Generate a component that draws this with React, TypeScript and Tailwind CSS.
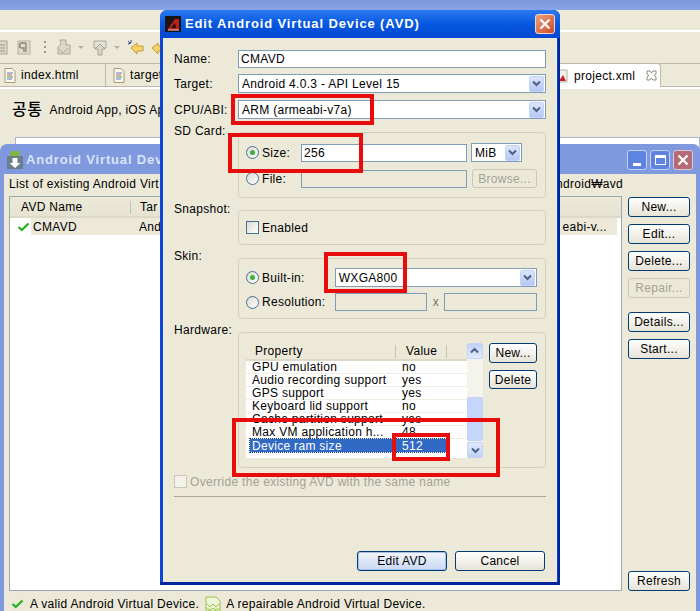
import React from "react";

const FONT = "font-['Liberation_Sans','Noto_Sans_CJK_KR',sans-serif] text-[12px] leading-[14px] tracking-[0.3px]";

function Chevron() {
  return (
    <svg width="9" height="7" viewBox="0 0 9 7" className="block">
      <path d="M1 1.5 L4.5 5 L8 1.5" fill="none" stroke="#4d6185" strokeWidth="2" />
    </svg>
  );
}

function ArrowBtn({ size = "w-[15px] h-[16px]" }: { size?: string }) {
  return (
    <span className={`${size} flex items-center justify-center rounded-[2px] border border-[#c3d3f7] bg-linear-to-b from-[#dbe5fb] to-[#b4c8f5]`}>
      <Chevron />
    </span>
  );
}

function TextBox({ children, className = "", disabled = false }: { children?: React.ReactNode; className?: string; disabled?: boolean }) {
  return (
    <div className={`border border-[#7f9db9] flex items-center pl-[2px] ${disabled ? "bg-[#ece9d8]" : "bg-white text-black"} ${className}`}>
      {children}
    </div>
  );
}

function Combo({ children, className = "" }: { children?: React.ReactNode; className?: string }) {
  return (
    <div className={`border border-[#7f9db9] bg-white flex items-center justify-between pl-[3px] pr-[1px] ${className}`}>
      <span>{children}</span>
      <ArrowBtn />
    </div>
  );
}

function Radio({ on = false }: { on?: boolean }) {
  return (
    <span className="w-[13px] h-[13px] rounded-full border border-[#4a6f94] bg-linear-to-br from-[#dcdcd4] to-white flex items-center justify-center shrink-0">
      {on && <span className="w-[5px] h-[5px] rounded-full bg-[#3fae3a]" />}
    </span>
  );
}

function Btn({ children, className = "", disabled = false, focus = false }: { children: React.ReactNode; className?: string; disabled?: boolean; focus?: boolean }) {
  return (
    <div
      className={`flex items-center justify-center rounded-[3px] border ${
        disabled
          ? "border-[#c9c7ba] bg-[#ece9d8] text-[#a5a294]"
          : focus
          ? "border-[#003c74] bg-linear-to-b from-[#f3f6fc] to-[#c9d8f3] text-black shadow-[inset_0_0_0_1px_#a9c0ea]"
          : "border-[#003c74] bg-linear-to-b from-white to-[#e6e3d6] text-black"
      } ${className}`}
    >
      {children}
    </div>
  );
}

function Group({ className = "", children }: { className?: string; children: React.ReactNode }) {
  return <div className={`min-w-0 rounded-[4px] border border-[#d4d0c0] ${className}`}>{children}</div>;
}

function RedBox({ className }: { className: string }) {
  return <div className={`absolute border-[4px] border-[#e80c0c] pointer-events-none ${className}`} />;
}

function DocIcon() {
  return (
    <svg width="12" height="15" viewBox="0 0 12 15" className="shrink-0">
      <path d="M1 .5H8L11 3.5V14.5H1Z" fill="#fbf8ec" stroke="#a59a78" />
      <path d="M3 5H9" stroke="#5a7fc0" />
      <path d="M3 7H8" stroke="#d05050" />
      <path d="M3 9H9" stroke="#50a060" />
      <path d="M3 11H8" stroke="#5a7fc0" />
    </svg>
  );
}

function Check() {
  return (
    <svg width="13" height="10" viewBox="0 0 13 10" className="shrink-0">
      <path d="M1.5 5 L4.8 8 L11.5 1.5" fill="none" stroke="#1cb51c" strokeWidth="2.2" />
    </svg>
  );
}

function Toolbar() {
  return (
    <div className="h-[31px] flex items-center">
      <svg width="180" height="20" viewBox="0 0 180 20" className="block">
        <rect x="-4" y="3" width="11" height="13" fill="#dbd8c8" stroke="#a9a695" />
        <path d="M0 7H5M0 10H5M0 13H5" stroke="#99968a" />
        <rect x="18" y="3" width="12" height="13" fill="#dfdccd" stroke="#b5b2a2" />
        <path d="M26 5H22a2.5 2.5 0 0 0 0 5h2V14M26 5V14" fill="none" stroke="#8a8778" strokeWidth="1.4" />
        <path d="M45 3v2M45 8v2M45 13v2" stroke="#9a9788" strokeWidth="2" />
        <path d="M60 2h6v5h4v9H58V9l3-3Z" fill="#dbd8c8" stroke="#aaa796" />
        <path d="M59 11 L63 15 L68 10" fill="none" stroke="#aaa796" />
        <path d="M78 8h6l-3 3Z" fill="#b3b0a0" />
        <path d="M94 3h12v7H94Z" fill="#e4e2d4" stroke="#aaa796" />
        <path d="M100 6l5 5h-3v6h-4v-6h-3Z" fill="#dbd8c8" stroke="#a5a291" />
        <path d="M114 8h6l-3 3Z" fill="#b3b0a0" />
        <path d="M128 3l2 2M131 2v3M128 6l3-1" stroke="#2a4a8a" />
        <path d="M131 10l6-5v3h6v5h-6v3Z" fill="#f6d36a" stroke="#c89a2a" />
        <path d="M152 10l6-5v3h6v5h-6v3Z" fill="#f6d36a" stroke="#c89a2a" />
      </svg>
    </div>
  );
}

function Eclipse() {
  return (
    <div className="absolute inset-0 bg-[#ece9d8]">
      <div className="h-[10px] bg-linear-to-b from-[#7d97dc] to-[#8aa5e6]" />
      <div className="h-[20px]" />
      <div className="h-[2px] bg-white" />
      <Toolbar />
      <div className="h-[24px] flex items-stretch border-t border-b border-[#bdbaa9]">
        <div className="w-[106px] border-r border-[#bdbaa9] flex items-center gap-[5px] pl-[4px]">
          <DocIcon />
          <span>index.html</span>
        </div>
        <div className="w-[54px] flex items-center gap-[5px] pl-[7px]">
          <DocIcon />
          <span>target</span>
        </div>
        <div className="flex-1" />
        <div className="w-[103px] h-[24px] -mt-[1px] bg-white border-t border-r border-[#bdbaa9] rounded-tr-[4px] flex items-center gap-[5px]">
          <svg width="10" height="14" viewBox="0 0 10 14" className="shrink-0">
            <path d="M0 1H9V13H0Z" fill="#f4f2ea" stroke="#b5b2a2" />
            <path d="M1 12 L5 6 L8 12Z" fill="#c8202a" />
          </svg>
          <span className="ml-[1px]">project.xml</span>
          <svg width="11" height="11" viewBox="0 0 11 11" className="ml-[6px] shrink-0">
            <path d="M1 1h3l1.5 2L7 1h3v3L8 5.5 10 7v3H7L5.5 8 4 10H1V7l2-1.500L1 4Z" fill="none" stroke="#8c8a7c" />
          </svg>
        </div>
        <div className="w-[39px]" />
      </div>
      <div className="h-[2px] bg-white" />
      <div className="pl-[12px] pt-[14px] flex items-center gap-[7px]">
        <span className="text-[16px] font-medium tracking-[0.5px]">공통</span>
        <span>Android App, iOS Ap</span>
      </div>
      <div className="ml-[15px] mt-[20px] h-[30px] border border-[#a9b8c8] bg-white" />
    </div>
  );
}

function ManagerWindow() {
  return (
    <div className="absolute left-0 top-[144px] w-[700px] h-[467px] flex flex-col rounded-t-[7px] bg-[#7f98de] px-[4px]">
      <div className="h-[30px] -mx-[4px] pl-[5px] pr-[7px] pt-[1px] flex items-center justify-between">
        <div className="flex items-center gap-[3px] pl-[2px]">
          <svg width="16" height="18" viewBox="0 0 16 18">
            <rect x="3" y="0" width="10" height="5" rx="2" fill="#7fb640" />
            <rect x="0" y="5" width="16" height="13" fill="#6b7f88" />
            <path d="M5.5 7h5v5h3l-5.5 5-5.5-5h3Z" fill="#fff" />
          </svg>
          <span className="text-[#d9e4fa] font-bold text-[13px] tracking-[0.85px]">Android Virtual Dev</span>
        </div>
        <div className="flex gap-[3px]">
          <div className="w-[20px] h-[20px] rounded-[3px] border border-[#c5d3f3] bg-[#5f83e0] flex items-end justify-center pb-[3px]">
            <div className="w-[8px] h-[3px] bg-white" />
          </div>
          <div className="w-[20px] h-[20px] rounded-[3px] border border-[#c5d3f3] bg-[#5f83e0] flex items-center justify-center">
            <div className="w-[11px] h-[10px] border border-white border-t-[3px]" />
          </div>
          <div className="w-[20px] h-[20px] rounded-[3px] border border-[#d8c8d8] bg-[#b56a78] flex items-center justify-center">
            <svg width="12" height="12" viewBox="0 0 12 12"><path d="M1.5 1.5 10.5 10.5M10.500 1.5 1.5 10.5" stroke="#fff" strokeWidth="2.2" /></svg>
          </div>
        </div>
      </div>
      <div className="flex-1 bg-[#ece9d8] flex flex-col px-[5px]">
        <div className="flex justify-between pr-[68px] pt-[3px] h-[22px]">
          <span>List of existing Android Virt</span>
          <span>ndroid₩avd</span>
        </div>
        <div className="h-[395px] flex gap-[6px]">
          <div className="w-[613px] h-[395px] border border-[#9aa8b0] bg-white flex flex-col">
            <div className="h-[21px] pt-[1px] bg-linear-to-b from-[#ece9d8] to-[#e6e3d2] border-b-[2px] border-[#dcd9c8] flex items-center">
              <span className="w-[120px] pl-[11px]">AVD Name</span>
              <span className="w-[1px] h-[13px] bg-[#c5c2b2]" />
              <span className="pl-[9px]">Tar</span>
            </div>
            <div className="h-[17px] flex items-center">
              <div className="w-[21px] pl-[7px]"><Check /></div>
              <div className="w-[586px] bg-[#ece9d8] h-full flex items-center justify-between pl-[2px] pr-[10px]">
                <span className="flex"><span className="w-[106px]">CMAVD</span><span>And</span></span>
                <span>eabi-v...</span>
              </div>
            </div>
          </div>
          <div className="w-[62px] flex flex-col">
            <Btn className="h-[20px] mt-[1px]">New...</Btn>
            <Btn className="h-[20px] mt-[7px]">Edit...</Btn>
            <Btn className="h-[20px] mt-[7px]">Delete...</Btn>
            <Btn className="h-[20px] mt-[7px]" disabled>Repair...</Btn>
            <Btn className="h-[20px] mt-[14px]">Details...</Btn>
            <Btn className="h-[20px] mt-[7px]">Start...</Btn>
            <Btn className="h-[20px] mt-auto">Refresh</Btn>
          </div>
        </div>
        <div className="h-[20px] pt-[6px] flex items-center gap-[6px] pl-[2px]">
          <Check />
          <span>A valid Android Virtual Device.</span>
          <svg width="16" height="16" viewBox="0 0 16 16" className="shrink-0">
            <path d="M1 1h10l4 4v10H1Z" fill="#eef6d8" stroke="#9cc04a" />
            <path d="M2 8l3 3 3-3 3 3 3-3M2 12l3 2 3-2 3 2 3-2" fill="none" stroke="#9cc04a" />
          </svg>
          <span className="-ml-[1px]">A repairable Android Virtual Device.</span>
        </div>
      </div>
    </div>
  );
}

const ROWS: [string, string][] = [
  ["GPU emulation", "no"],
  ["Audio recording support", "yes"],
  ["GPS support", "yes"],
  ["Keyboard lid support", "no"],
  ["Cache partition support", "yes"],
  ["Max VM application h...", "48"],
];

function HardwareTable() {
  return (
    <div className="flex">
      <div className="w-[221px] h-[115px] bg-white flex flex-col overflow-hidden">
        <div className="h-[18px] shrink-0 bg-[#ece9d8] border-b-[2px] border-[#dcd9c8] flex items-center">
          <span className="w-[149px] pl-[9px]">Property</span>
          <span className="w-[1px] h-[13px] bg-[#c5c2b2]" />
          <span className="pl-[10px] w-[50px]">Value</span>
          <span className="w-[1px] h-[13px] bg-[#c5c2b2]" />
        </div>
        {ROWS.map(([k, v]) => (
          <div key={k} className="h-[13px] shrink-0 flex items-center border-b border-[#f1efe2]">
            <span className="w-[150px] pl-[6px] whitespace-nowrap">{k}</span>
            <span className="pl-[6px] w-[50px]">{v}</span>
          </div>
        ))}
        <div className="h-[13px] shrink-0 flex items-center ml-[4px] w-[196px] bg-[#316ac5] text-white outline-1 outline-dotted outline-[#1a3f80]">
          <span className="w-[146px] pl-[2px]">Device ram size</span>
          <span className="pl-[6px]">512</span>
        </div>
      </div>
      <div className="w-[16px] h-[115px] bg-[#f5f4ec] flex flex-col justify-between relative">
        <span className="w-[16px] h-[16px] rounded-[2px] border border-[#c3d3f7] bg-linear-to-b from-[#e1eafe] to-[#c0d1f8] flex items-center justify-center rotate-180"><Chevron /></span>
        <span className="absolute left-0 top-[54px] w-[16px] h-[44px] rounded-[2px] border border-[#c3d3f7] bg-[#c6d5fb]" />
        <span className="w-[16px] h-[16px] rounded-[2px] border border-[#c3d3f7] bg-linear-to-b from-[#e1eafe] to-[#c0d1f8] flex items-center justify-center"><Chevron /></span>
      </div>
    </div>
  );
}

function Dialog() {
  return (
    <div className="absolute left-[160px] top-[10px] w-[400px] h-[575px] rounded-t-[7px] bg-[#0a46d8] flex flex-col shadow-[inset_-2px_0_0_#00259c,inset_0_-3px_0_#00259c]">
      <div className="h-[28px] shrink-0 flex items-center justify-between pl-[5px] pr-[5px] rounded-t-[7px] bg-linear-to-b from-[#2a7af0] via-[#0757e0] to-[#0448d2]">
        <div className="flex items-center gap-[4px]">
          <svg width="16" height="16" viewBox="0 0 16 16" className="shrink-0">
            <rect width="16" height="16" fill="#1a1412" />
            <path d="M2 14 L10 3 L14 3 L14 14Z" fill="#b8201c" />
            <path d="M6 12 L10 7 L11 12Z" fill="#1a1412" />
            <path d="M3 14H14" stroke="#e8d8d0" />
          </svg>
          <span className="text-white font-bold text-[13px] tracking-[0.88px]">Edit Android Virtual Device (AVD)</span>
        </div>
        <div className="w-[20px] h-[20px] rounded-[3px] border border-[#f0d8d0] bg-linear-to-br from-[#e8a080] to-[#d04820] flex items-center justify-center">
          <svg width="12" height="12" viewBox="0 0 12 12"><path d="M1.5 1.5 10.5 10.5M10.5 1.5 1.5 10.5" stroke="#fff" strokeWidth="2.2" /></svg>
        </div>
      </div>
      <div className="flex-1 mx-[3px] mb-[3px] bg-[#ece9d8] px-[11px] pt-[12px] flex flex-col text-black">
        <div className="grid grid-cols-[64px_1fr] items-center">
          <span>Name:</span>
          <TextBox className="h-[18px]">CMAVD</TextBox>
        </div>
        <div className="grid grid-cols-[64px_1fr] items-center mt-[6px]">
          <span>Target:</span>
          <Combo className="h-[19px]">Android 4.0.3 - API Level 15</Combo>
        </div>
        <div className="grid grid-cols-[64px_1fr] items-center mt-[7px]">
          <span>CPU/ABI:</span>
          <Combo className="h-[19px]">ARM (armeabi-v7a)</Combo>
        </div>

        <div className="grid grid-cols-[64px_minmax(0,1fr)] mt-[13px]">
          <span className="-mt-[8px]">SD Card:</span>
          <Group className="h-[66px] pl-[7px] pr-[8px] pt-[10px]">
            <div className="flex items-center h-[19px]">
              <Radio on />
              <span className="ml-[3px] w-[39px]">Size:</span>
              <TextBox className="w-[166px] h-[18px]">256</TextBox>
              <Combo className="ml-[4px] w-[51px] h-[19px]">MiB</Combo>
            </div>
            <div className="flex items-center h-[19px] mt-[7px]">
              <Radio />
              <span className="ml-[3px] w-[39px]">File:</span>
              <TextBox disabled className="w-[166px] h-[18px]" />
              <Btn disabled className="ml-[5px] w-[65px] h-[19px]">Browse...</Btn>
            </div>
          </Group>
        </div>

        <div className="grid grid-cols-[64px_minmax(0,1fr)] mt-[12px]">
          <span className="-mt-[8px]">Snapshot:</span>
          <Group className="h-[35px] pl-[7px] flex items-center">
            <span className="w-[13px] h-[13px] border border-[#4a6f94] bg-linear-to-br from-[#dcdcd4] to-white" />
            <span className="ml-[3px]">Enabled</span>
          </Group>
        </div>

        <div className="grid grid-cols-[64px_minmax(0,1fr)] mt-[13px]">
          <span className="-mt-[9px]">Skin:</span>
          <Group className="h-[61px] pl-[7px] pr-[8px] pt-[9px]">
            <div className="flex items-center h-[19px]">
              <Radio on />
              <span className="ml-[3px] w-[73px]">Built-in:</span>
              <Combo className="w-[203px] h-[19px]">WXGA800</Combo>
            </div>
            <div className="flex items-center h-[18px] mt-[6px]">
              <Radio />
              <span className="ml-[3px] w-[73px]">Resolution:</span>
              <TextBox disabled className="w-[93px] h-[18px]" />
              <span className="w-[17px] text-center text-[#77756a]">x</span>
              <TextBox disabled className="w-[93px] h-[18px]" />
            </div>
          </Group>
        </div>

        <div className="grid grid-cols-[64px_minmax(0,1fr)] mt-[13px]">
          <span className="-mt-[9px]">Hardware:</span>
          <Group className="h-[136px] pl-[7px] pt-[10px] flex gap-[6px]">
            <HardwareTable />
            <div className="w-[48px] flex flex-col gap-[7px]">
              <Btn className="h-[20px]">New...</Btn>
              <Btn className="h-[19px]">Delete</Btn>
            </div>
          </Group>
        </div>

        <div className="flex items-center mt-[6px] h-[15px] text-[#a5a294]">
          <span className="w-[13px] h-[13px] border border-[#c9c7ba] bg-[#f4f2e8]" />
          <span className="ml-[3px]">Override the existing AVD with the same name</span>
        </div>
        <div className="h-[1px] mt-[7px] mb-[1px] bg-[#aca899]" />
        <div className="flex justify-end gap-[8px] mt-[53px] pr-[1px]">
          <Btn focus className="w-[90px] h-[20px]">Edit AVD</Btn>
          <Btn className="w-[90px] h-[20px]">Cancel</Btn>
        </div>
      </div>
    </div>
  );
}

export default function App() {
  return (
    <div className={`relative w-[700px] h-[611px] overflow-hidden text-black ${FONT}`}>
      <Eclipse />
      <ManagerWindow />
      <Dialog />
      <RedBox className="left-[231px] top-[94px] w-[143px] h-[31px]" />
      <RedBox className="left-[228px] top-[133px] w-[135px] h-[40px]" />
      <RedBox className="left-[324px] top-[252px] w-[83px] h-[41px]" />
      <RedBox className="left-[232px] top-[418px] w-[268px] h-[59px]" />
      <RedBox className="left-[392px] top-[433px] w-[58px] h-[28px]" />
    </div>
  );
}
